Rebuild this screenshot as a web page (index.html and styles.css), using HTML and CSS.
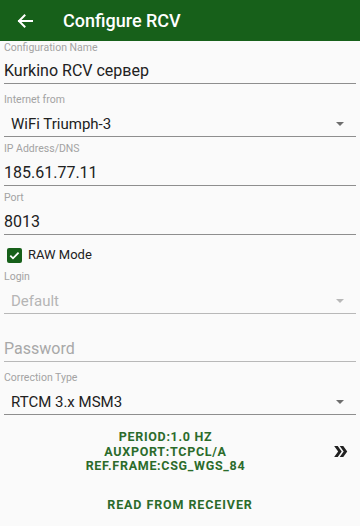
FILE: index.html
```html
<!DOCTYPE html>
<html lang="en">
<head>
<meta charset="utf-8">
<link rel="stylesheet" href="styles.css">
</head>
<body>
<header class="appbar">
  <svg class="back" width="16" height="14" viewBox="0 0 16 14"><path d="M15 7H2 M7.5 1.5L2 7l5.5 5.5" fill="none" stroke="#fff" stroke-width="2" stroke-linecap="square"/></svg>
  <div class="title">Configure RCV</div>
</header>
<main class="form">
  <div class="field first">
    <div class="label">Configuration Name</div>
    <div class="value">Kurkino RCV сервер</div>
  </div>
  <div class="field spinner">
    <div class="label">Internet from</div>
    <div class="value select">WiFi Triumph-3<span class="caret"></span></div>
  </div>
  <div class="field">
    <div class="label">IP Address/DNS</div>
    <div class="value">185.61.77.11</div>
  </div>
  <div class="field">
    <div class="label">Port</div>
    <div class="value">8013</div>
  </div>
  <div class="check-row">
    <span class="checkbox"><svg width="15" height="15" viewBox="0 0 15 15"><path d="M3.3 7.6l2.7 2.7 5.6-5.6" fill="none" stroke="#fff" stroke-width="1.8"/></svg></span>
    <span class="check-label">RAW Mode</span>
  </div>
  <div class="field spinner login disabled">
    <div class="label">Login</div>
    <div class="value select">Default<span class="caret"></span></div>
  </div>
  <div class="field password disabled">
    <div class="value hint">Password</div>
  </div>
  <div class="field spinner">
    <div class="label">Correction Type</div>
    <div class="value select">RTCM 3.x MSM3<span class="caret"></span></div>
  </div>
  <div class="info-row">
    <div class="info">
      <div>PERIOD:1.0 HZ</div>
      <div>AUXPORT:TCPCL/A</div>
      <div>REF.FRAME:CSG_WGS_84</div>
    </div>
    <svg class="more" width="19" height="19" viewBox="0 0 24 24"><path d="M15.5 5H11l5 7-5 7h4.5l5-7z M8.5 5H4l5 7-5 7h4.5l5-7z" fill="#212121"/></svg>
  </div>
  <div class="read">READ FROM RECEIVER</div>
</main>
</body>
</html>
```
FILE: styles.css
```css
html, body {
  margin: 0;
  padding: 0;
  background: #fafafa;
  font-family: Roboto, "Noto Sans", sans-serif;
  color: #212121;
}
body {
  width: 360px;
  height: 526px;
  overflow: hidden;
}
.appbar {
  height: 41px;
  background: #17601a;
  display: flex;
  align-items: center;
  color: #fff;
}
.back {
  margin-left: 17px;
  margin-right: 30px;
}
.title {
  font-size: 18px;
  font-weight: 500;
  line-height: 22px;
}
.form {
  display: flex;
  flex-direction: column;
}
.field {
  margin: 0 4px;
  padding-top: 5px;
  border-bottom: 1px solid #8e8e8e;
}
.field.first {
  padding-top: 0;
}
.field.first .label {
  line-height: 13px;
}
.label {
  font-size: 10.5px;
  line-height: 14px;
  color: #a3a3a3;
}
.value {
  margin-top: 5px;
  font-size: 16px;
  line-height: 24px;
  color: #212121;
}
.spinner {
  padding-top: 9px;
}
.spinner .value {
  margin-top: 5px;
}
.select {
  display: flex;
  align-items: center;
  padding-left: 7px;
  padding-right: 12px;
  font-size: 15px;
}
.caret {
  margin-left: auto;
  width: 0;
  height: 0;
  border-left: 4px solid transparent;
  border-right: 4px solid transparent;
  border-top: 4px solid #6e6e6e;
}
.login {
  padding-top: 0;
}
.disabled {
  border-bottom-color: #b8b8b8;
}
.disabled .value {
  color: #b5b5b5;
}
.disabled .caret {
  border-top-color: #b8b8b8;
}
.password {
  padding-top: 23px;
}
.hint {
  margin-top: 0;
  font-size: 16px;
}
.field.password .value {
  color: #a8a8a8;
}
.check-row {
  display: flex;
  align-items: center;
  padding: 12px 7px 7px;
  height: 16px;
}
.checkbox {
  width: 15px;
  height: 15px;
  border-radius: 2px;
  background: #17601a;
  display: flex;
}
.check-label {
  margin-left: 6px;
  font-size: 13px;
  line-height: 16px;
}
.info-row {
  display: flex;
  align-items: center;
  margin-top: 15px;
}
.info {
  flex: 1;
  text-align: center;
  font-size: 12.5px;
  font-weight: 700;
  line-height: 14.5px;
  letter-spacing: 0.7px;
  color: #2b6b2b;
}
.more {
  margin-left: 0;
  margin-right: 10px;
}
.read {
  margin-top: 23px;
  text-align: center;
  font-size: 12.5px;
  font-weight: 700;
  letter-spacing: 0.9px;
  line-height: 16px;
  color: #2b6b2b;
}
```
